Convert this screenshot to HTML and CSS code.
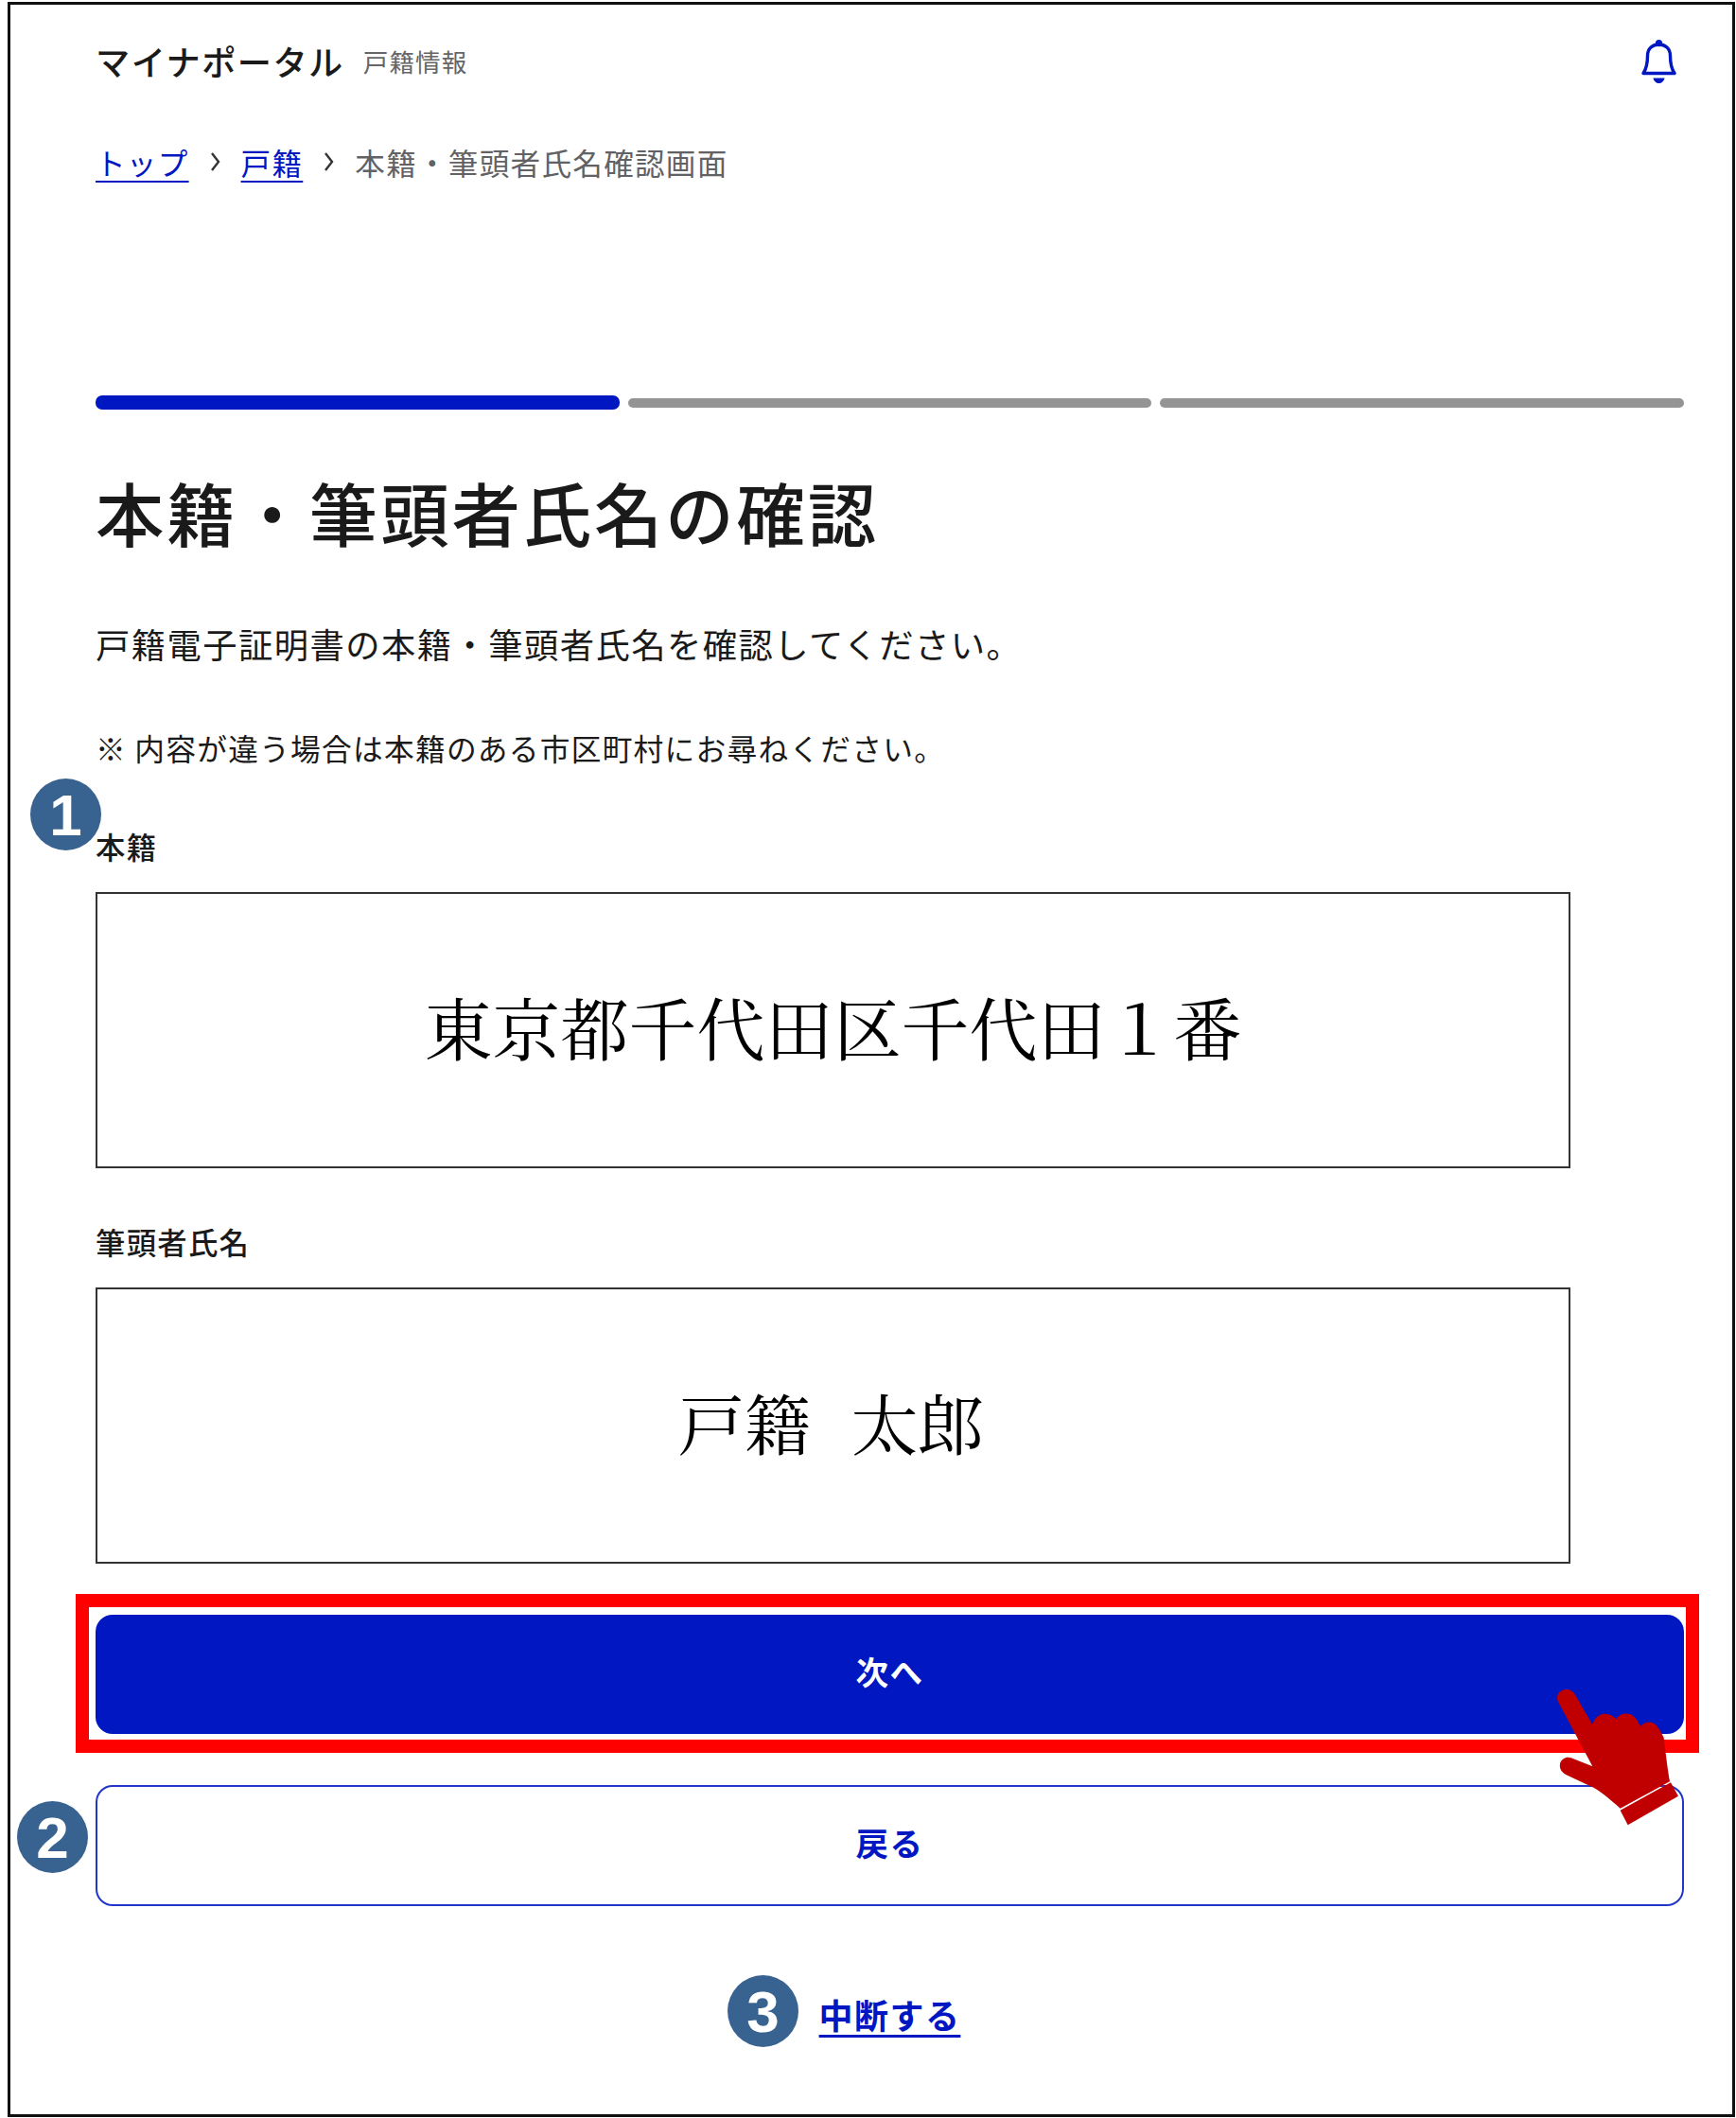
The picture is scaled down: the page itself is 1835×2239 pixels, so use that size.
FILE: index.html
```html
<!DOCTYPE html>
<html lang="ja">
<head>
  <meta charset="UTF-8">
  <title>本籍・筆頭者氏名確認画面</title>
  <link rel="stylesheet" href="styles.css">
</head>
<body>

<div class="frame">
  <header class="top-bar">
    <div class="brand">
      <span class="brand-name">マイナポータル</span>
      <span class="brand-sub">戸籍情報</span>
    </div>
    <svg class="bell" viewBox="0 0 37 46" aria-label="お知らせ">
      <circle cx="18.5" cy="3.6" r="3.6" fill="#0017c1"/>
      <path d="M2 35.5C5 31 6.5 27 6.5 17C6.5 9 12 5 18.5 5C25 5 30.5 9 30.5 17C30.5 27 32 31 35 35.5Z" fill="none" stroke="#0017c1" stroke-width="3.4" stroke-linejoin="round"/>
      <path d="M12.5 40.5H24.5C24 44 21 46 18.5 46C16 46 13 44 12.5 40.5Z" fill="#0017c1"/>
    </svg>
  </header>

  <nav class="breadcrumb">
    <a href="#">トップ</a>
    <svg class="chevron" viewBox="0 0 11 22"><path d="M2 2L9 11L2 20" fill="none" stroke="#333" stroke-width="2.4"/></svg>
    <a href="#">戸籍</a>
    <svg class="chevron" viewBox="0 0 11 22"><path d="M2 2L9 11L2 20" fill="none" stroke="#333" stroke-width="2.4"/></svg>
    <span class="current">本籍・筆頭者氏名確認画面</span>
  </nav>

  <div class="steps">
    <div class="step active"></div>
    <div class="step"></div>
    <div class="step"></div>
  </div>

  <h1>本籍・筆頭者氏名の確認</h1>
  <p class="lead">戸籍電子証明書の本籍・筆頭者氏名を確認してください。</p>
  <p class="note">※ 内容が違う場合は本籍のある市区町村にお尋ねください。</p>

  <div class="field-label first">本籍</div>
  <div class="record record-address">東京都千代田区千代田１番</div>

  <div class="field-label">筆頭者氏名</div>
  <div class="record record-name">戸籍 太郎</div>

  <div class="highlight">
    <button class="btn btn-primary">次へ</button>
  </div>
  <button class="btn btn-outline">戻る</button>

  <div class="suspend"><a href="#">中断する</a></div>

  <span class="badge badge-1">1</span>
  <span class="badge badge-2">2</span>
  <span class="badge badge-3">3</span>

  <svg class="hand" viewBox="285 375 390 438">
    <path d="M290 415C282 392 300 376 320 378C332 379 340 386 346 396L400 490C406 466 424 454 440 455C456 456 466 462 476 472C484 458 498 454 512 455C528 456 540 468 552 495C562 484 574 480 586 482C602 485 612 502 626 530C632 580 638 630 645 670L488 755C460 730 430 705 405 690L320 650C300 642 293 625 298 610C304 596 320 590 332 595L400 622Z" fill="#c00000"/>
    <path d="M488 761L648 673L672 716L512 808Z" fill="#c00000"/>
  </svg>
</div>

</body>
</html>
```

FILE: styles.css
```css
* {
  box-sizing: border-box;
  letter-spacing: 0.04em;
}
body {
  margin: 0;
  padding: 2px 0 0 8px;
  background: #fff;
  color: #1a1a1a;
  font-family: "Noto Sans CJK JP", "Noto Sans", sans-serif;
}
.frame {
  position: relative;
  width: 1826px;
  height: 2236px;
  border: 3px solid #111;
  padding: 0 51px 0 90px;
}
.top-bar {
  display: flex;
  align-items: center;
  justify-content: space-between;
  height: 120px;
}
.brand {
  display: flex;
  align-items: center;
  gap: 20px;
  padding-bottom: 2px;
}
.brand-name {
  font-size: 36.2px;
  font-weight: 500;
}
.brand-sub {
  font-size: 26.6px;
  color: #666;
}
.bell {
  width: 37px;
  height: 46px;
  margin-right: 8px;
}
.breadcrumb {
  display: flex;
  align-items: center;
  gap: 22px;
  height: 44px;
  margin-top: 24px;
  font-size: 31.6px;
  line-height: 44px;
}
.breadcrumb a {
  color: #0017c1;
  text-underline-offset: 6px;
  text-decoration-thickness: 2px;
}
.breadcrumb .current { color: #626264; }
.chevron {
  width: 11px;
  height: 22px;
}
.steps {
  display: flex;
  align-items: center;
  gap: 9px;
  height: 15px;
  margin-top: 225px;
}
.step {
  flex: 1;
  height: 10px;
  border-radius: 5px;
  background: #949494;
}
.step.active {
  height: 15px;
  border-radius: 7px;
  background: #0017c1;
}
h1 {
  margin: 58px 0 0;
  font-size: 72.4px;
  font-weight: 500;
  line-height: 100px;
}
.lead {
  margin: 64px 0 0;
  font-size: 36.3px;
  line-height: 50px;
}
.note {
  margin: 65px 0 0;
  font-size: 31.7px;
  line-height: 40px;
}
.field-label {
  margin-top: 58px;
  font-size: 31.4px;
  font-weight: 500;
  line-height: 40px;
}
.field-label.first { margin-top: 65px; }
.record {
  display: flex;
  align-items: center;
  justify-content: center;
  width: 1559px;
  height: 292px;
  margin-top: 28px;
  padding-bottom: 10px;
  border: 2px solid #333;
  color: #000;
  font-family: "Noto Serif CJK JP", "Noto Sans CJK JP", serif;
  font-weight: 400;
  letter-spacing: 0;
}
.record-address { font-size: 72px; }
.record-name {
  padding-right: 4px;
  font-size: 70px;
  word-spacing: 25px;
}
.highlight {
  width: 1716px;
  height: 168px;
  margin: 32px 0 0 -21px;
  padding: 8px 2px 6px 7px;
  border: 14px solid #f00;
}
.btn {
  display: block;
  width: 1679px;
  height: 126px;
  padding-bottom: 10px;
  border-radius: 18px;
  font-family: inherit;
  font-size: 34.5px;
  font-weight: 700;
}
.btn-primary {
  border: none;
  background: #0017c1;
  color: #fff;
}
.btn-outline {
  height: 128px;
  margin-top: 34px;
  border: 2px solid #2236c9;
  background: #fff;
  color: #0017c1;
}
.suspend {
  margin-top: 89px;
  font-size: 36px;
  font-weight: 700;
  line-height: 50px;
  text-align: center;
}
.suspend a {
  color: #0017c1;
  text-underline-offset: 6px;
}
.badge {
  position: absolute;
  display: flex;
  align-items: center;
  justify-content: center;
  width: 75px;
  height: 76px;
  border-radius: 50%;
  background: #386290;
  color: #fff;
  font-family: "Liberation Sans", sans-serif;
  font-size: 62px;
  font-weight: 700;
  letter-spacing: 0;
}
.badge-1 { left: 21px; top: 818px; }
.badge-2 { left: 7px; top: 1899px; }
.badge-3 { left: 758px; top: 2083px; }
.hand {
  position: absolute;
  left: 1634px;
  top: 1780px;
  width: 130px;
  height: 146px;
}
```
